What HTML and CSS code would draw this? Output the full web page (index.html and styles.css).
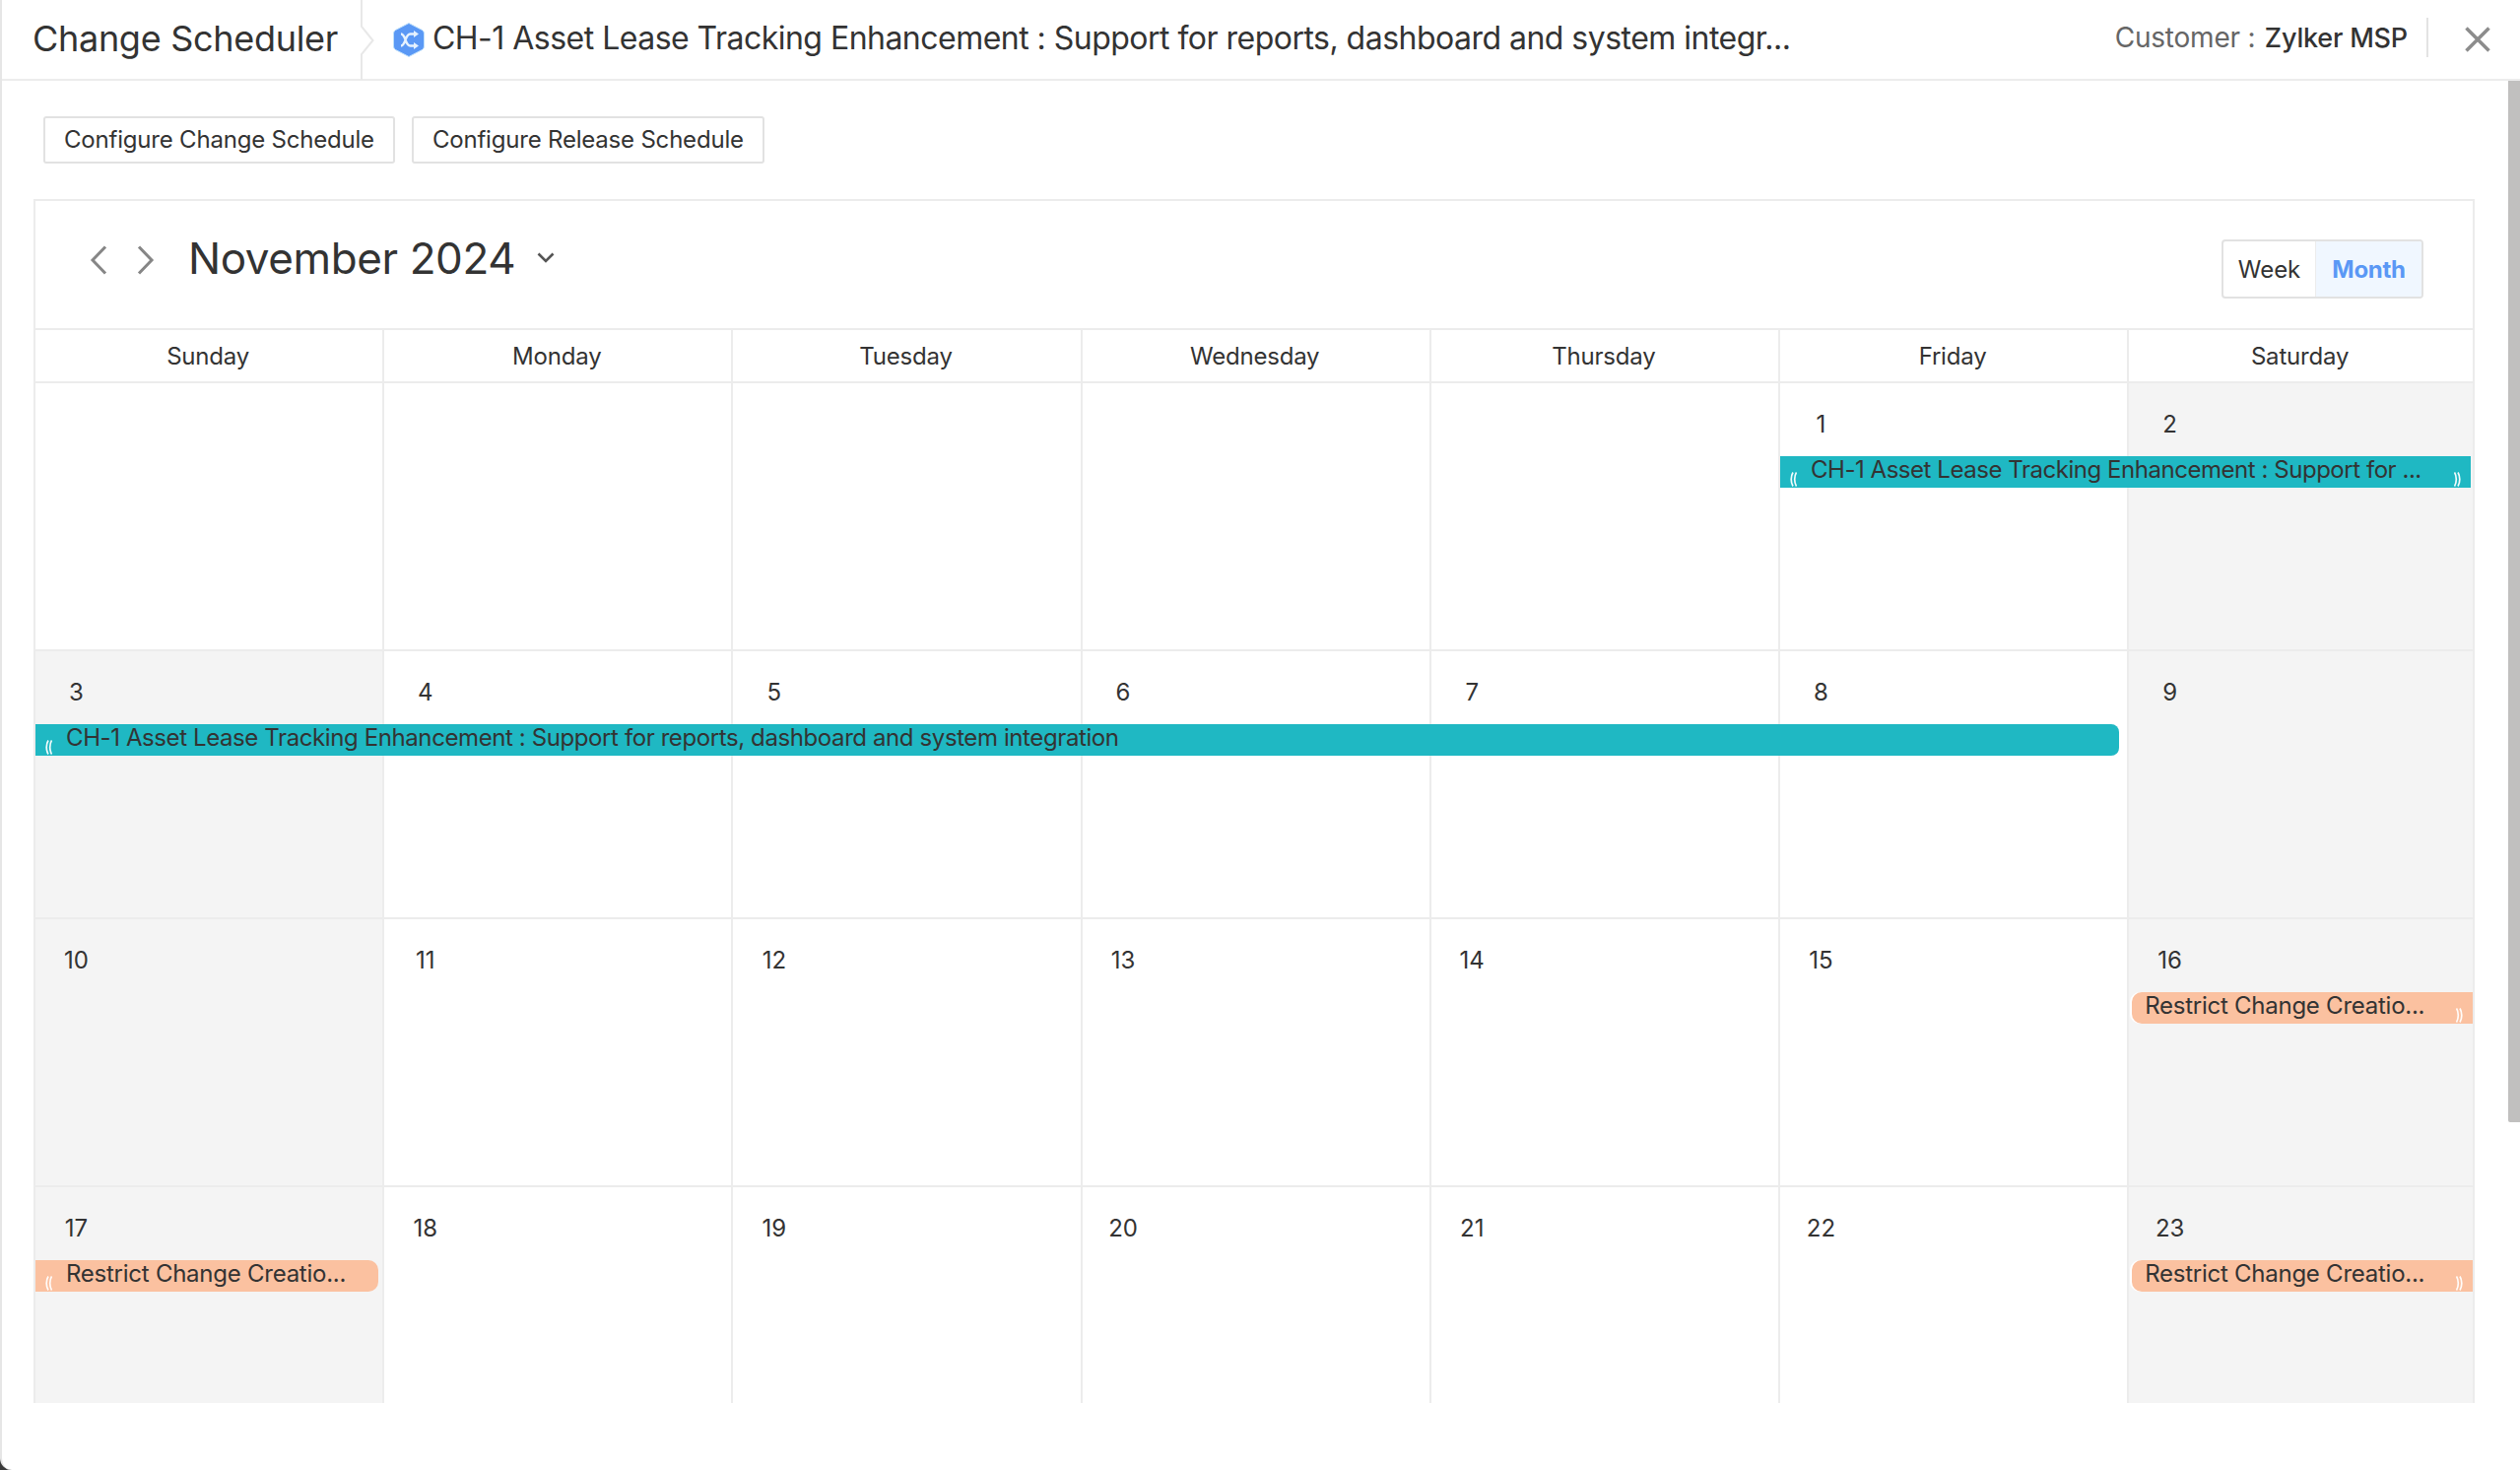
FILE: index.html
```html
<!DOCTYPE html>
<html lang="en">
<head>
<meta charset="utf-8">
<title>Change Scheduler</title>
<link rel="stylesheet" href="styles.css">
</head>
<body>
<svg class="svg-defs" width="0" height="0" aria-hidden="true">
  <symbol id="grip-left" viewBox="0 0 8 15"><path d="M4 .5C1.600 4.500 1.600 10.500 4 14.500M7.500 .5C5.100 4.500 5.100 10.500 7.500 14.500" fill="none" stroke="#fff" stroke-opacity=".95" stroke-width="1.700"/></symbol>
  <symbol id="grip-right" viewBox="0 0 8 15"><path d="M4 .5C6.400 4.500 6.400 10.500 4 14.500M.5 .5C2.900 4.500 2.900 10.500 .5 14.500" fill="none" stroke="#fff" stroke-opacity=".95" stroke-width="1.700"/></symbol>
</svg>
<div class="modal">
  <header class="topbar">
    <h1 class="app-title">Change Scheduler</h1>
    <svg class="crumb-sep" width="14" height="82" viewBox="0 0 14 82"><path d="M1 0V28L12.500 42L1 56V82" fill="none" stroke="#e8e8e8" stroke-width="2"/></svg>
    <svg class="change-icon" width="34" height="37" viewBox="0 0 34 37">
      <path d="M17 1.500 30.500 8.500Q32.500 9.500 32.500 12V25Q32.500 27.500 30.500 28.500L17 35.500 3.500 28.500Q1.500 27.500 1.500 25V12Q1.500 9.500 3.500 8.500Z" fill="#5a98f5" stroke="#bfe0fb" stroke-width="1"/>
      <path d="M9 12.500C14 12.500 13 24.500 18.500 24.500H23M9 24.500C14 24.500 13 12.500 18.500 12.500H23" fill="none" stroke="#e6f2fe" stroke-width="2.400"/>
      <path d="M22 9 27 12.500 22 16ZM22 21 27 24.500 22 28Z" fill="#e6f2fe"/>
    </svg>
    <div class="change-title">CH-1 Asset Lease Tracking Enhancement : Support for reports, dashboard and system integr...</div>
    <div class="customer"><span class="customer-label">Customer :</span> <span class="customer-name">Zylker MSP</span></div>
    <div class="bar-divider"></div>
    <svg class="close-icon" width="26" height="26" viewBox="0 0 26 26"><path d="M1.500 1.500 24.500 24.500M24.500 1.500 1.500 24.500" fill="none" stroke="#8c8c8c" stroke-width="3.500"/></svg>
  </header>

  <div class="content">
    <main class="main">
      <div class="actions">
        <button class="btn">Configure Change Schedule</button>
        <button class="btn">Configure Release Schedule</button>
      </div>

      <section class="calendar">
        <div class="cal-head">
          <svg class="nav-icon" width="18" height="30" viewBox="0 0 18 30"><path d="M16 1.500 3 15 16 28.500" fill="none" stroke="#868686" stroke-width="3"/></svg>
          <svg class="nav-icon nav-next" width="18" height="30" viewBox="0 0 18 30"><path d="M2 1.500 15 15 2 28.500" fill="none" stroke="#868686" stroke-width="3"/></svg>
          <div class="month-title">November 2024</div>
          <svg class="month-caret" width="18" height="11" viewBox="0 0 18 11"><path d="M1.500 1.500 9 9 16.500 1.500" fill="none" stroke="#555" stroke-width="2.600"/></svg>
          <div class="view-toggle">
            <div class="view-opt">Week</div>
            <div class="view-opt view-active">Month</div>
          </div>
        </div>

        <div class="week-grid weekdays">
          <div class="wd">Sunday</div><div class="wd">Monday</div><div class="wd">Tuesday</div><div class="wd">Wednesday</div><div class="wd">Thursday</div><div class="wd">Friday</div><div class="wd">Saturday</div>
        </div>

        <div class="week-grid week">
          <div class="cell"></div><div class="cell"></div><div class="cell"></div><div class="cell"></div><div class="cell"></div>
          <div class="cell"><span class="num">1</span></div>
          <div class="cell off"><span class="num">2</span></div>
          <div class="event teal ev-first">
            <svg class="grip grip-l"><use href="#grip-left"/></svg>
            <span class="ev-text">CH-1 Asset Lease Tracking Enhancement : Support for ...</span>
            <svg class="grip grip-r"><use href="#grip-right"/></svg>
          </div>
        </div>

        <div class="week-grid week">
          <div class="cell off"><span class="num">3</span></div>
          <div class="cell"><span class="num">4</span></div>
          <div class="cell"><span class="num">5</span></div>
          <div class="cell"><span class="num">6</span></div>
          <div class="cell"><span class="num">7</span></div>
          <div class="cell"><span class="num">8</span></div>
          <div class="cell off"><span class="num">9</span></div>
          <div class="event teal ev-long">
            <svg class="grip grip-l"><use href="#grip-left"/></svg>
            <span class="ev-text">CH-1 Asset Lease Tracking Enhancement : Support for reports, dashboard and system integration</span>
          </div>
        </div>

        <div class="week-grid week">
          <div class="cell off"><span class="num">10</span></div>
          <div class="cell"><span class="num">11</span></div>
          <div class="cell"><span class="num">12</span></div>
          <div class="cell"><span class="num">13</span></div>
          <div class="cell"><span class="num">14</span></div>
          <div class="cell"><span class="num">15</span></div>
          <div class="cell off"><span class="num">16</span></div>
          <div class="event peach ev-sat">
            <span class="ev-text">Restrict Change Creatio...</span>
            <svg class="grip grip-r"><use href="#grip-right"/></svg>
          </div>
        </div>

        <div class="week-grid week week-last">
          <div class="cell off"><span class="num">17</span></div>
          <div class="cell"><span class="num">18</span></div>
          <div class="cell"><span class="num">19</span></div>
          <div class="cell"><span class="num">20</span></div>
          <div class="cell"><span class="num">21</span></div>
          <div class="cell"><span class="num">22</span></div>
          <div class="cell off"><span class="num">23</span></div>
          <div class="event peach ev-sun">
            <svg class="grip grip-l"><use href="#grip-left"/></svg>
            <span class="ev-text">Restrict Change Creatio...</span>
          </div>
          <div class="event peach ev-sat">
            <span class="ev-text">Restrict Change Creatio...</span>
            <svg class="grip grip-r"><use href="#grip-right"/></svg>
          </div>
        </div>
      </section>
    </main>
    <div class="scroll-track"><div class="scroll-thumb"></div></div>
  </div>
</div>
</body>
</html>
```
FILE: styles.css
```css
* { box-sizing: border-box; }
html, body { margin: 0; height: 100%; overflow: hidden; }
body { background: #3a3a3a; font-family: Inter, "Liberation Sans", sans-serif; color: #333; }
.svg-defs { display: block; height: 0; }

.modal {
  height: 1492px;
  background: #fff;
  border-left: 2px solid #e6e6e6;
  border-bottom-left-radius: 12px;
  display: flex;
  flex-direction: column;
  overflow: hidden;
}

.topbar {
  height: 82px;
  flex: none;
  display: flex;
  align-items: center;
  border-bottom: 2px solid #ececec;
}
.app-title { margin: 0 0 2px 31px; width: 333px; font-size: 36px; font-weight: 400; letter-spacing: -.3px; white-space: nowrap; }
.crumb-sep { flex: none; margin-right: 18px; }
.change-icon { flex: none; margin: 0 7px 0 0; }
.change-title { font-size: 32px; letter-spacing: -.52px; white-space: nowrap; margin-bottom: 3px; }
.customer { margin-left: auto; font-size: 27px; white-space: nowrap; margin-bottom: 5px; letter-spacing: -.2px; }
.customer-label { color: #666; font-size: 28px; }
.customer-name { font-weight: 500; color: #333; margin-left: 2px; }
.bar-divider { width: 2px; height: 40px; background: #e3e3e3; margin: 0 37px 5px 19px; flex: none; }
.close-icon { flex: none; margin-right: 30px; }

.content { flex: 1; display: flex; min-height: 0; }
.main { flex: 1; min-width: 0; padding-left: 32px; padding-right: 34px; }
.scroll-track { width: 12px; flex: none; }
.scroll-thumb { height: 1057px; background: #c1c0bf; border-bottom-left-radius: 2px; }

.actions { display: flex; gap: 17px; padding: 36px 0 36px 10px; }
.btn {
  height: 48px;
  padding: 0 19px 2px;
  background: #fff;
  border: 2px solid #e2e2e2;
  border-radius: 3px;
  font: 400 24px Inter, "Liberation Sans", sans-serif;
  letter-spacing: -.2px;
  color: #333;
}

.calendar {
  height: 1222px;
  border: solid #ececec;
  border-width: 2px 2px 0;
  overflow: hidden;
}
.cal-head {
  height: 131px;
  display: flex;
  align-items: flex-start;
  padding: 44px 50px 0 55px;
  border-bottom: 2px solid #ececec;
}
.nav-icon { flex: none; margin-top: 1px; }
.nav-next { margin-left: 30px; }
.month-title { font-size: 44px; margin-left: 34px; line-height: 28px; letter-spacing: -.4px; }
.month-caret { margin: 8px 0 0 22px; flex: none; }
.view-toggle {
  margin-left: auto;
  margin-top: -5px;
  height: 60px;
  display: flex;
  border: 2px solid #e2e2e2;
  border-radius: 4px;
  font-size: 24px;
  overflow: hidden;
}
.view-opt { display: flex; align-items: center; justify-content: center; width: 93px; }
.view-active { width: 108px; background: #f0f7ff; color: #5a98f5; font-weight: 700; letter-spacing: -.3px; border-left: 1px solid #ececec; }

.week-grid { display: grid; grid-template-columns: repeat(6, 354.2px) 1fr; }
.weekdays { height: 54px; border-bottom: 2px solid #ececec; }
.wd {
  display: flex; align-items: center; justify-content: center;
  font-size: 24px; letter-spacing: -.2px;
  padding-right: 2px;
  border-right: 2px solid #ececec;
}
.wd:last-child { border-right: 0; }

.week { height: 272px; grid-template-rows: 1fr; border-bottom: 2px solid #ececec; }
.week:nth-child(6) { height: 271px; }
.week-last { border-bottom: 0; }
.cell { grid-row: 1; border-right: 2px solid #ececec; }
.cell:nth-child(1) { grid-column: 1; }
.cell:nth-child(2) { grid-column: 2; }
.cell:nth-child(3) { grid-column: 3; }
.cell:nth-child(4) { grid-column: 4; }
.cell:nth-child(5) { grid-column: 5; }
.cell:nth-child(6) { grid-column: 6; }
.cell:nth-child(7) { grid-column: 7; border-right: 0; }
.off { background: #f4f4f4; }
.num {
  display: block;
  width: 83px;
  height: 84px;
  line-height: 84px;
  text-align: center;
  font-size: 24px;
}

.event {
  grid-row: 1;
  align-self: start;
  margin-top: 74px;
  height: 32px;
  display: flex;
  font-size: 24px;
  line-height: 28px;
  color: #333;
  white-space: nowrap;
  overflow: hidden;
  letter-spacing: -.25px;
}
.teal { background: #1fb8c3; letter-spacing: -.4px; }
.peach { background: #fbc1a0; }
.ev-text { margin-left: 31px; }
.grip { width: 8px; height: 15px; align-self: flex-end; flex: none; margin-bottom: 1px; }
.grip-l { margin-left: 9px; margin-right: -17px; }
.grip-r { margin-left: auto; margin-right: 9px; }
.ev-first { grid-column: 6 / 8; margin-right: 2px; letter-spacing: -.46px; }
.ev-long { grid-column: 1 / 7; margin-right: 10px; border-radius: 0 8px 8px 0; }
.ev-sat { grid-column: 7; margin-left: 3px; border-radius: 10px 0 0 10px; box-shadow: -2px 0 0 #fff; }
.ev-sat .ev-text { margin-left: 13px; }
.ev-sun { grid-column: 1; margin-right: 6px; border-radius: 0 10px 10px 0; }
```
